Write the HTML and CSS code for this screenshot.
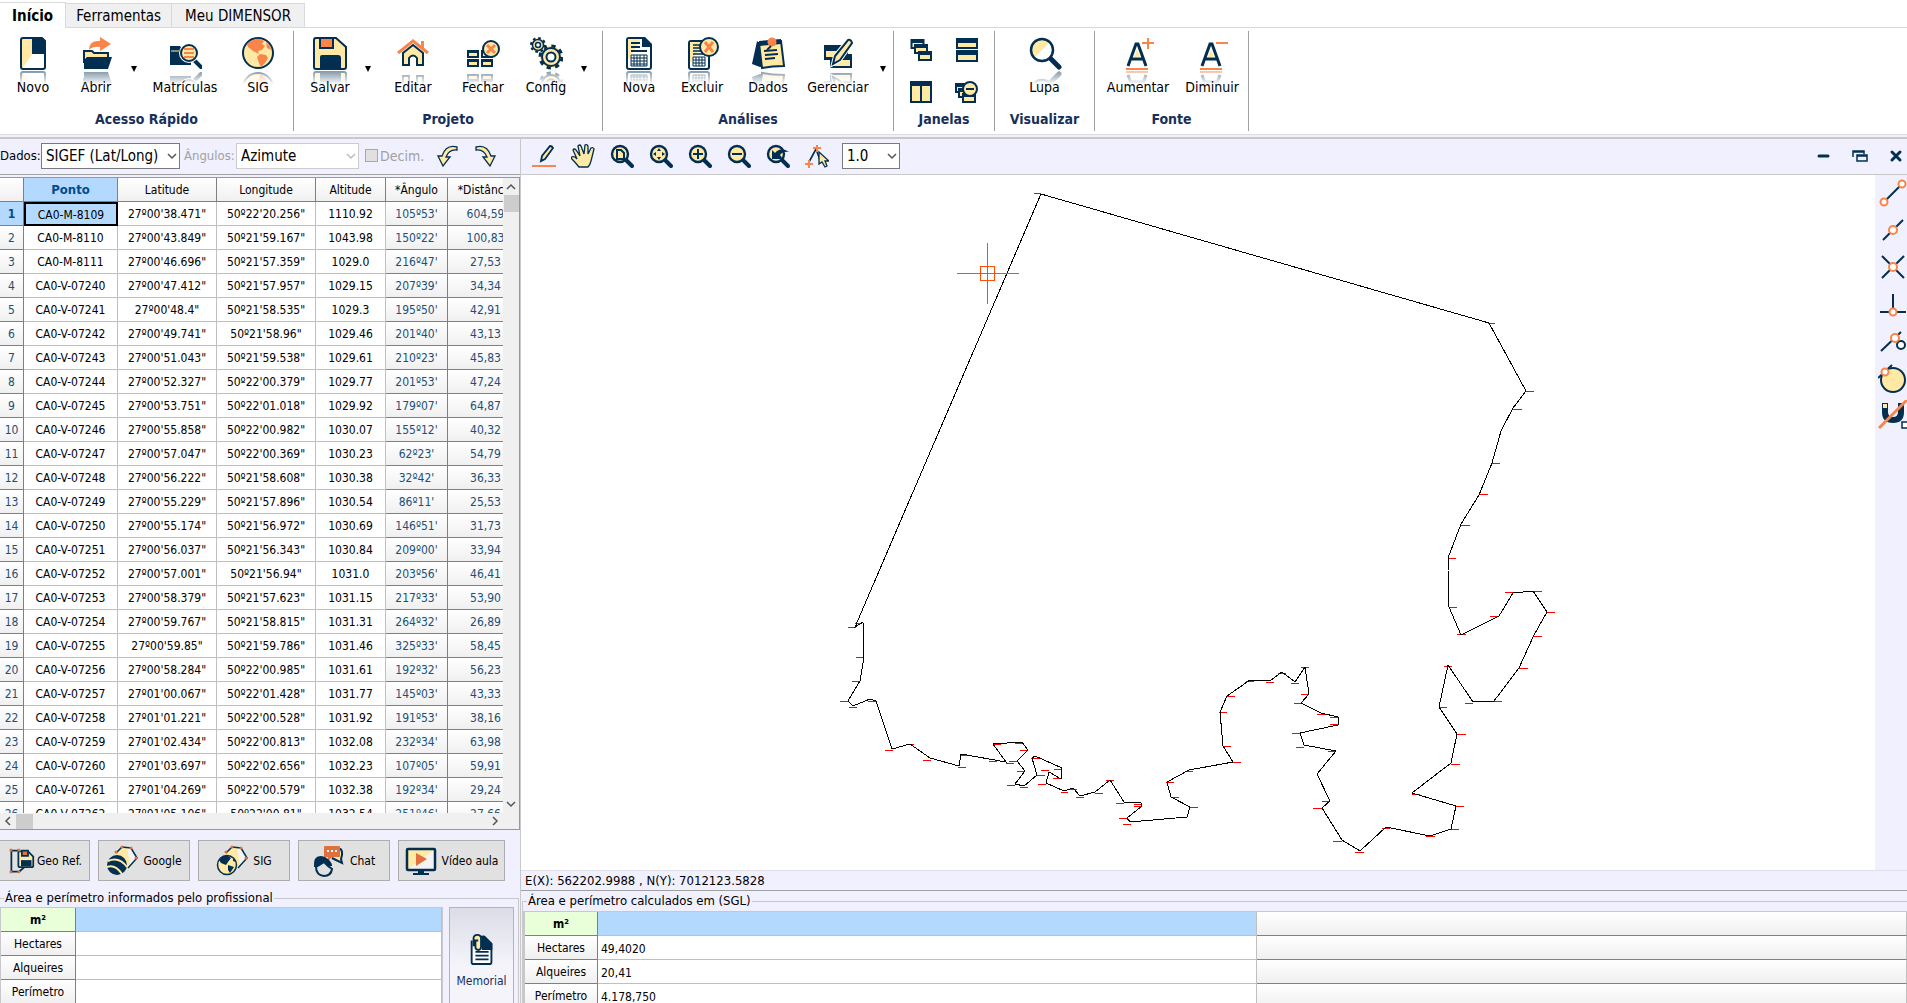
FILE: index.html
```html
<!DOCTYPE html>
<html lang="pt-BR">
<head>
<meta charset="utf-8">
<title>Dimensor</title>
<link rel="stylesheet" href="styles.css">
</head>
<body>
<svg class="defs" aria-hidden="true">
  <symbol id="lens" viewBox="0 0 24 24"><path d="M15 15l7 7" stroke="#022f51" stroke-width="4" stroke-linecap="round"/><circle cx="10" cy="10" r="8" fill="#ffe9a5" stroke="#022f51" stroke-width="2.4"/></symbol>
  <symbol id="chev" viewBox="0 0 10 10"><path d="M1 3l4 4 4-4" fill="none" stroke="currentColor" stroke-width="1.5"/></symbol>
  <symbol id="win" viewBox="0 0 14 10"><path d="M0 0h14v10H0z" fill="#022f51"/><path d="M2 4h10v4H2z" fill="#ffe9a5"/></symbol>
</svg>

<header class="ribbon">
  <nav class="tabs">
    <button class="tab tab-on">Início</button>
    <button class="tab">Ferramentas</button>
    <button class="tab">Meu DIMENSOR</button>
  </nav>
  <div class="groups">
    <section class="group g-quick">
      <div class="tools">
        <button class="tool w66"><span class="ico"><svg viewBox="0 0 34 34"><path d="M5 2h23v31H5z" fill="#fff"/><path d="M5 2h12v15L6 33H5z" fill="#ffe9a5"/><path d="M16 2h10l3 3v13H16z" fill="#022f51"/><path d="M7 2h19l3 3v26q0 2-2 2H7q-2 0-2-2V4q0-2 2-2z" fill="none" stroke="#022f51" stroke-width="2"/></svg></span>Novo</button>
        <button class="tool w60"><span class="ico"><svg viewBox="0 0 34 34"><path d="M5 27V15h8l2 2h14v6" fill="#ffe9a5" stroke="#022f51" stroke-width="2"/><path d="M5 33V24l3-3h25l-4 12z" fill="#022f51"/><path d="M10 14q0-10 11-9V1l11 7-11 7v-4q-7-1-11 3z" fill="#f98549"/></svg></span>Abrir</button>
        <button class="drop" aria-label="Mais opções de abrir"></button>
        <button class="tool w86"><span class="ico"><svg viewBox="0 0 34 34"><path d="M2 10h10l2 3h9v16H2z" fill="#022f51"/><path d="M3 15h8" stroke="#ffe9a5"/><path d="M26 24l7 7" stroke="#022f51" stroke-width="4" stroke-linecap="round"/><circle cx="21" cy="17" r="8" fill="#ffe9a5" stroke="#fff" stroke-width="4"/><circle cx="21" cy="17" r="8" fill="#ffe9a5" stroke="#022f51" stroke-width="2"/><path d="M16 13h10M16 17h10M16 21h10" stroke="#f98549" stroke-width="2"/></svg></span>Matrículas</button>
        <button class="tool w60"><span class="ico"><svg viewBox="0 0 34 34"><circle cx="17" cy="17" r="15" fill="#ffe9a5" stroke="#022f51" stroke-width="2"/><path d="M6 8q6-6 13-5l4 2-2 3 3 2-3 4-4 1 1 3-6-3-5-4zM19 18l6 1 2 3-3 5-4 4-2-4-2-6z M25 6l4 4 1 4-4-2z" fill="#f98549"/></svg></span>SIG</button>
      </div>
      <h2>Acesso Rápido</h2>
    </section>
    <section class="group g-project">
      <div class="tools">
        <button class="tool w60"><span class="ico"><svg viewBox="0 0 34 34"><path d="M3 2h20l10 9v20q0 2-2 2H3q-2 0-2-2V4q0-2 2-2z" fill="#ffe9a5" stroke="#022f51" stroke-width="2"/><path d="M7 2h13v10H7z" fill="#f98549" stroke="#022f51" stroke-width="2"/><path d="M7 33V21q0-2 2-2h16q3 0 3 3v11z" fill="#022f51"/></svg></span>Salvar</button>
        <button class="drop" aria-label="Mais opções de salvar"></button>
        <button class="tool w74"><span class="ico"><svg viewBox="0 0 34 34"><path d="M7 17v12h6v-7q4-5 8 0v7h6V17L17 9z" fill="#ffe9a5" stroke="#022f51" stroke-width="2"/><path d="M2 17L17 5l15 12" fill="none" stroke="#f98549" stroke-width="3"/><path d="M25 5h3v7h-3z" fill="#f98549"/></svg></span>Editar</button>
        <button class="tool w66"><span class="ico"><svg viewBox="0 0 34 34"><g fill="#ffe9a5" stroke="#022f51" stroke-width="2"><path d="M2 15h10v6H2zM16 15h10v6H16zM2 24h10v6H2zM16 24h10v6H16z"/></g><path d="M1 14h12v3H1zM1 23h12v3H1zM15 23h12v3H15z" fill="#022f51"/><circle cx="25" cy="13" r="8" fill="#ffe9a5" stroke="#022f51" stroke-width="2"/><path d="M21 9l8 8M29 9l-8 8" stroke="#f98549" stroke-width="3"/></svg></span>Fechar</button>
        <button class="tool w60"><span class="ico"><svg viewBox="0 0 34 34"><g fill="#ffe9a5" stroke="#022f51"><circle cx="22" cy="21" r="11" stroke-width="3" stroke-dasharray="4.300 4.340"/><circle cx="22" cy="21" r="9" stroke-width="2"/><circle cx="22" cy="21" r="4.500" fill="#fff" stroke-width="2"/><circle cx="9" cy="9" r="7" stroke-width="2" stroke-dasharray="2.700 2.800"/><circle cx="9" cy="9" r="5.500" stroke-width="1.500"/><circle cx="9" cy="9" r="2.500" fill="#fff" stroke-width="1.500"/></g></svg></span>Config</button>
        <button class="drop" aria-label="Mais opções de configuração"></button>
      </div>
      <h2>Projeto</h2>
    </section>
    <section class="group g-analysis">
      <div class="tools">
        <button class="tool w60"><span class="ico"><svg viewBox="0 0 34 34"><path d="M7 2h15l7 8v21q0 2-2 2H7q-2 0-2-2V4q0-2 2-2z" fill="#fff" stroke="#022f51" stroke-width="2"/><path d="M6 3h13L6 24z" fill="#ffe9a5"/><path d="M20 1h3l7 7v3H20z" fill="#022f51"/><path d="M9 7h9M9 11h9M9 15h16" stroke="#022f51" stroke-width="2"/><path d="M9 19h16v11H9zM9 22h16M9 25h16M9 28h16M12 19v11M15 19v11M18 19v11M22 19v11" fill="none" stroke="#022f51"/></svg></span>Nova</button>
        <button class="tool w66"><span class="ico"><svg viewBox="0 0 34 34"><path d="M6 5h18v26q0 2-2 2H6q-2 0-2-2V7q0-2 2-2z" fill="#fff" stroke="#022f51" stroke-width="2"/><path d="M5 6h14L5 27z" fill="#ffe9a5"/><path d="M8 9h8M8 12h8M8 15h8M8 18h13" stroke="#022f51" stroke-width="1.500"/><path d="M8 21h12v9H8zM8 24h12M8 27h12M11 21v9M14 21v9M17 21v9" fill="none" stroke="#022f51"/><circle cx="24" cy="11" r="9" fill="#ffe9a5" stroke="#022f51" stroke-width="2"/><path d="M20 6l8 10M28 6l-8 10" stroke="#f98549" stroke-width="3"/></svg></span>Excluir</button>
        <button class="tool w66"><span class="ico"><svg viewBox="0 0 34 34"><path d="M6 5L1 28l8 3 21-2z" fill="#022f51"/><path d="M8 7l22-2 3 25q-12 0-22 2z" fill="#ffe9a5" stroke="#022f51" stroke-width="2"/><path d="M8 5l22-2v5L8 10z" fill="#022f51"/><path d="M13 15l13-1M14 19l13-1M14 23l10-1" stroke="#022f51" stroke-width="2"/><circle cx="21" cy="6" r="4.500" fill="#f98549"/><path d="M20 10l-4 4" stroke="#022f51" stroke-width="2"/></svg></span>Dados</button>
        <button class="tool w74"><span class="ico"><svg viewBox="0 0 34 34"><path d="M3 9h24v15H3zM9 18h22v14H9z" fill="#022f51"/><path d="M5 15h12v6H5zM11 24h18v6H11z" fill="#ffe9a5"/><path d="M12 28l2-8L27 4q3-1 4 3L19 24z" fill="#ffe9a5" stroke="#fff" stroke-width="4"/><path d="M12 28l2-8L27 4q3-1 4 3L19 24z" fill="#ffe9a5" stroke="#022f51" stroke-width="2"/></svg></span>Gerenciar</button>
        <button class="drop" aria-label="Mais opções de gerenciar"></button>
      </div>
      <h2>Análises</h2>
    </section>
    <section class="group g-windows">
      <div class="minis">
        <button class="mini" aria-label="Cascata"><svg viewBox="0 0 24 24"><use href="#win" x="1" y="1" width="15" height="10"/><use href="#win" x="4" y="6" width="16" height="10"/><use href="#win" x="8" y="13" width="16" height="10"/></svg></button>
        <button class="mini" aria-label="Lado a lado horizontal"><svg viewBox="0 0 24 24"><path d="M1 0h22v11H1zM1 12h22v12H1z" fill="#022f51"/><path d="M3 5h18v4H3zM3 17h18v5H3z" fill="#ffe9a5"/></svg></button>
        <button class="mini" aria-label="Lado a lado vertical"><svg viewBox="0 0 24 24"><path d="M1 1h22v22H1z" fill="#022f51"/><path d="M3 6h8v15H3zM13 6h8v15h-8z" fill="#ffe9a5"/></svg></button>
        <button class="mini" aria-label="Fechar janelas"><svg viewBox="0 0 24 24"><use href="#win" x="0" y="3" width="14" height="10"/><use href="#win" x="3" y="8" width="14" height="10"/><use href="#win" x="6" y="13" width="16" height="10"/><circle cx="15" cy="9" r="7" fill="#ffe9a5" stroke="#022f51" stroke-width="2"/><path d="M11 9h8" stroke="#022f51" stroke-width="2"/></svg></button>
      </div>
      <h2>Janelas</h2>
    </section>
    <section class="group g-view">
      <div class="tools">
        <button class="tool w66"><span class="ico"><svg viewBox="0 0 34 34"><path d="M22 22l9 9" stroke="#022f51" stroke-width="5" stroke-linecap="round"/><circle cx="14" cy="14" r="11" fill="#fff"/><path d="M22 6L6 22A11 11 0 0 1 22 6z" fill="#ffe9a5"/><circle cx="14" cy="14" r="11" fill="none" stroke="#022f51" stroke-width="2.500"/></svg></span>Lupa</button>
      </div>
      <h2>Visualizar</h2>
    </section>
    <section class="group g-font">
      <div class="tools">
        <button class="tool w74"><span class="ico"><svg viewBox="0 0 34 34"><path d="M7 30L15 8h2l8 22M10 23h12" fill="none" stroke="#022f51" stroke-width="3"/><path d="M16 13l3 8h-6z" fill="#ffe9a5"/><path d="M5 33h22M27 2v11M21 7h12" stroke="#f98549" stroke-width="2"/></svg></span>Aumentar</button>
        <button class="tool w74"><span class="ico"><svg viewBox="0 0 34 34"><path d="M7 30L15 8h2l8 22M10 23h12" fill="none" stroke="#022f51" stroke-width="3"/><path d="M16 13l3 8h-6z" fill="#ffe9a5"/><path d="M5 33h22M21 7h12" stroke="#f98549" stroke-width="2"/></svg></span>Diminuir</button>
      </div>
      <h2>Fonte</h2>
    </section>
  </div>
</header>

<main class="work">
  <aside class="left">
    <div class="filters">
      <label for="dados">Dados:</label>
      <span class="pick p-dados"><select id="dados"><option>SIGEF (Lat/Long)</option></select><svg><use href="#chev"/></svg></span>
      <label class="off" for="ang">Ângulos:</label>
      <span class="pick p-ang"><select id="ang" disabled><option>Azimute</option></select><svg><use href="#chev"/></svg></span>
      <label class="check off"><input type="checkbox" disabled>Decim.</label>
      <button class="turn" aria-label="Desfazer"><svg viewBox="0 0 22 22"><path d="M21 2Q10-1 6 11H2l5 10 7-9h-4Q13 4 21 5z" fill="#ffe9a5" stroke="#022f51" stroke-width="1.300"/></svg></button>
      <button class="turn" aria-label="Refazer"><svg viewBox="0 0 22 22"><path d="M1 2q11-3 15 9h4l-5 10-7-9h4Q9 4 1 5z" fill="#ffe9a5" stroke="#022f51" stroke-width="1.300"/></svg></button>
    </div>

    <div class="grid">
      <div class="view">
        <table class="points">
          <colgroup><col class="c-n"><col class="c-p"><col class="c-lat"><col class="c-lon"><col class="c-alt"><col class="c-ang"><col class="c-dis"></colgroup>
          <thead><tr><th></th><th class="sel">Ponto</th><th>Latitude</th><th>Longitude</th><th>Altitude</th><th>*Ângulo</th><th>*Distância</th></tr></thead>
          <tbody>
          <tr class="cur"><th>1<td>CA0-M-8109<td>27º00'38.471"<td>50º22'20.256"<td>1110.92<td>105º53'<td>604,59
          <tr><th>2<td>CA0-M-8110<td>27º00'43.849"<td>50º21'59.167"<td>1043.98<td>150º22'<td>100,83
          <tr><th>3<td>CA0-M-8111<td>27º00'46.696"<td>50º21'57.359"<td>1029.0<td>216º47'<td>27,53
          <tr><th>4<td>CA0-V-07240<td>27º00'47.412"<td>50º21'57.957"<td>1029.15<td>207º39'<td>34,34
          <tr><th>5<td>CA0-V-07241<td>27º00'48.4"<td>50º21'58.535"<td>1029.3<td>195º50'<td>42,91
          <tr><th>6<td>CA0-V-07242<td>27º00'49.741"<td>50º21'58.96"<td>1029.46<td>201º40'<td>43,13
          <tr><th>7<td>CA0-V-07243<td>27º00'51.043"<td>50º21'59.538"<td>1029.61<td>210º23'<td>45,83
          <tr><th>8<td>CA0-V-07244<td>27º00'52.327"<td>50º22'00.379"<td>1029.77<td>201º53'<td>47,24
          <tr><th>9<td>CA0-V-07245<td>27º00'53.751"<td>50º22'01.018"<td>1029.92<td>179º07'<td>64,87
          <tr><th>10<td>CA0-V-07246<td>27º00'55.858"<td>50º22'00.982"<td>1030.07<td>155º12'<td>40,32
          <tr><th>11<td>CA0-V-07247<td>27º00'57.047"<td>50º22'00.369"<td>1030.23<td>62º23'<td>54,79
          <tr><th>12<td>CA0-V-07248<td>27º00'56.222"<td>50º21'58.608"<td>1030.38<td>32º42'<td>36,33
          <tr><th>13<td>CA0-V-07249<td>27º00'55.229"<td>50º21'57.896"<td>1030.54<td>86º11'<td>25,53
          <tr><th>14<td>CA0-V-07250<td>27º00'55.174"<td>50º21'56.972"<td>1030.69<td>146º51'<td>31,73
          <tr><th>15<td>CA0-V-07251<td>27º00'56.037"<td>50º21'56.343"<td>1030.84<td>209º00'<td>33,94
          <tr><th>16<td>CA0-V-07252<td>27º00'57.001"<td>50º21'56.94"<td>1031.0<td>203º56'<td>46,41
          <tr><th>17<td>CA0-V-07253<td>27º00'58.379"<td>50º21'57.623"<td>1031.15<td>217º33'<td>53,90
          <tr><th>18<td>CA0-V-07254<td>27º00'59.767"<td>50º21'58.815"<td>1031.31<td>264º32'<td>26,89
          <tr><th>19<td>CA0-V-07255<td>27º00'59.85"<td>50º21'59.786"<td>1031.46<td>325º33'<td>58,45
          <tr><th>20<td>CA0-V-07256<td>27º00'58.284"<td>50º22'00.985"<td>1031.61<td>192º32'<td>56,23
          <tr><th>21<td>CA0-V-07257<td>27º01'00.067"<td>50º22'01.428"<td>1031.77<td>145º03'<td>43,33
          <tr><th>22<td>CA0-V-07258<td>27º01'01.221"<td>50º22'00.528"<td>1031.92<td>191º53'<td>38,16
          <tr><th>23<td>CA0-V-07259<td>27º01'02.434"<td>50º22'00.813"<td>1032.08<td>232º34'<td>63,98
          <tr><th>24<td>CA0-V-07260<td>27º01'03.697"<td>50º22'02.656"<td>1032.23<td>107º05'<td>59,91
          <tr><th>25<td>CA0-V-07261<td>27º01'04.269"<td>50º22'00.579"<td>1032.38<td>192º34'<td>29,24
          <tr><th>26<td>CA0-V-07262<td>27º01'05.106"<td>50º22'00.81"<td>1032.54<td>251º46'<td>27,66
          </tbody>
        </table>
      </div>
      <div class="vbar"><svg class="up"><use href="#chev"/></svg><span></span><svg><use href="#chev"/></svg></div>
      <div class="hbar"><svg class="lf"><use href="#chev"/></svg><span></span><svg class="rt"><use href="#chev"/></svg></div>
    </div>

    <div class="actions">
      <button class="act a-geo"><svg viewBox="0 0 32 32"><path d="M13 4H5v24h9l6-5" fill="none" stroke="#022f51" stroke-width="2"/><path d="M13 5h11l6 6v10q0 2-2 2H15q-2 0-2-2z" fill="#ffe9a5" stroke="#022f51" stroke-width="2"/><path d="M17 4h7v6h-7z" fill="#e0713f" stroke="#022f51" stroke-width="2"/><path d="M16 15h12v7H16z" fill="#022f51"/><g fill="#e0713f"><path d="M3 2h3v3H3zM3 27h3v3H3zM12 27h3v3h-3zM12 2h3v3h-3z"/></g></svg>Geo Ref.</button>
      <button class="act"><svg viewBox="0 0 32 32"><path d="M10 8l6-6 9 1 6 10-9 10-12-5z" fill="#f4f4f4"/><path d="M10 8l6-6h5l3 18-4 3-10-5z" fill="#ffe9a5"/><path d="M10 8l6-6 9 1 6 10-9 10" fill="none" stroke="#022f51" stroke-width="1.500"/><g fill="#e0713f"><circle cx="16" cy="2" r="1.500"/><circle cx="25" cy="3" r="1.500"/><circle cx="30" cy="13" r="1.500"/><circle cx="10" cy="7" r="1.500"/></g><circle cx="11" cy="20" r="10" fill="#022f51"/><path d="M2 16q11-5 19 6M1 22q8-3 15 7" fill="none" stroke="#ffe9a5" stroke-width="2"/></svg>Google</button>
      <button class="act"><svg viewBox="0 0 32 32"><path d="M10 8l6-6 9 1 6 10-9 10-12-5z" fill="#f4f4f4"/><path d="M10 8l6-6h5l3 18-4 3-10-5z" fill="#ffe9a5"/><path d="M10 8l6-6 9 1 6 10-9 10" fill="none" stroke="#022f51" stroke-width="1.500"/><g fill="#e0713f"><circle cx="16" cy="2" r="1.500"/><circle cx="25" cy="3" r="1.500"/><circle cx="30" cy="13" r="1.500"/><circle cx="10" cy="7" r="1.500"/></g><circle cx="11" cy="20" r="9.500" fill="#ffe9a5" stroke="#022f51" stroke-width="1.500"/><path d="M3 15q4-5 9-4l3 2-3 4-2 3-5-2zM12 20l6 2-4 6-2-3zM17 13l3 4-3-1z" fill="#022f51"/></svg>SIG</button>
      <button class="act"><svg viewBox="0 0 32 32"><path d="M22 3q8-1 7 7l-1 4 1 4-6-3-4-2" fill="#ffe9a5" stroke="#022f51" stroke-width="2"/><path d="M12 1h14q1 0 1 1v9q0 1-1 1h-7l-4 4v-4h-3q-1 0-1-1V2q0-1 1-1z" fill="#e0713f"/><path d="M14 6h2M18 6h2M22 6h2" stroke="#fff" stroke-width="2"/><path d="M1 22Q0 8 12 12q7 4 7 9z" fill="#022f51"/><path d="M3 22l5-3 3-2 4 4 4 3q-1 7-8 7-8-1-8-9z" fill="#e1e1e1" stroke="#022f51" stroke-width="2"/></svg>Chat</button>
      <button class="act a-video"><svg viewBox="0 0 32 32"><path d="M2 4h28v21H2z" fill="#f4f4f4"/><path d="M2 4h28L2 25z" fill="#ffe9a5"/><rect x="2" y="4" width="28" height="21" rx="1" fill="none" stroke="#022f51" stroke-width="2.500"/><path d="M11 8l11 6-11 7z" fill="#e0713f"/><path d="M13 25h6v3h5v2H8v-2h5z" fill="#022f51"/></svg>Vídeo aula</button>
    </div>

    <fieldset class="area a-left">
      <legend>Área e perímetro informados pelo profissional</legend>
      <table class="sums">
        <tr class="first"><th>m²</th><td></td></tr>
        <tr><th>Hectares</th><td></td></tr>
        <tr><th>Alqueires</th><td></td></tr>
        <tr><th>Perímetro</th><td></td></tr>
      </table>
      <button class="memo"><svg viewBox="0 0 24 34"><path d="M4 4h10l8 8v19q0 2-2 2H3q-2 0-2-2V8" fill="#fff" stroke="#022f51" stroke-width="2"/><path d="M12 3h3l8 8v7H12z" fill="#022f51"/><path d="M5 20h14M5 24h14M5 28h14" stroke="#022f51" stroke-width="2"/><path d="M3 14V6q0-4 4-4t4 4v9q0 3-3 3t-3-3V8h3" fill="#ffe9a5" stroke="#022f51" stroke-width="2"/></svg>Memorial</button>
    </fieldset>
  </aside>

  <section class="right">
    <div class="mapbar">
      <button aria-label="Desenhar"><svg viewBox="0 0 24 24"><path d="M9 17l1-5 8-10q2 0 3 2l-8 11z" fill="#ffe9a5" stroke="#022f51" stroke-width="1.800"/><path d="M0 22h24" stroke="#f98549" stroke-width="2"/></svg></button>
      <button aria-label="Mover"><svg viewBox="0 0 24 24"><path d="M8 23q-4-5-8-9 1-2 4-1l2 2-4-9q1-2 3 0l4 6L7 2q2-2 3 0l3 8 1-9q2-1 3 1l0 8 3-6q2-1 3 1l-3 12q-1 4-3 6z" fill="#ffe9a5" stroke="#022f51" stroke-width="1.300"/></svg></button>
      <button aria-label="Enquadrar folha"><svg viewBox="0 0 24 24"><use href="#lens"/><path d="M7 6h4l3 3v6H7z" fill="#ffe9a5" stroke="#022f51" stroke-width="2"/></svg></button>
      <button aria-label="Enquadrar tudo"><svg viewBox="0 0 24 24"><use href="#lens"/><path d="M10 4l2 3H8zM10 16l2-3H8zM4 10l3-2v4zM16 10l-3-2v4z" fill="#022f51"/></svg></button>
      <button aria-label="Ampliar"><svg viewBox="0 0 24 24"><use href="#lens"/><path d="M5 10h10M10 5v10" stroke="#022f51" stroke-width="2"/></svg></button>
      <button aria-label="Reduzir"><svg viewBox="0 0 24 24"><use href="#lens"/><path d="M5 10h10" stroke="#022f51" stroke-width="2"/></svg></button>
      <button aria-label="Zoom anterior"><svg viewBox="0 0 24 24"><use href="#lens"/><path d="M6 15V6l3 3q6-7 14-1-6-1-9 3l3 4z" fill="#022f51"/></svg></button>
      <button aria-label="Selecionar vértice"><svg viewBox="0 0 24 24"><path d="M4 18L11 5l5 14" fill="none" stroke="#022f51" stroke-width="1.600"/><path d="M12 1v7M8 4h8M4 16v8M0 20h8" stroke="#f98549" stroke-width="2"/><path d="M14 8v12l3-2 3 5 2-1-2-5h4z" fill="#ffe9a5" stroke="#022f51" stroke-width="1.300"/></svg></button>
      <span class="pick p-scale"><select aria-label="Escala"><option>1.0</option></select><svg><use href="#chev"/></svg></span>
      <span class="wins">
        <button aria-label="Minimizar"><svg viewBox="0 0 16 16"><path d="M3 8h9" stroke="#022f51" stroke-width="3" stroke-linecap="round"/></svg></button>
        <button aria-label="Restaurar"><svg viewBox="0 0 16 16"><path d="M1 9V3h11v3M1 4h11M5 7h10v6H5zM5 8h10" fill="none" stroke="#022f51" stroke-width="1.500"/></svg></button>
        <button aria-label="Fechar"><svg viewBox="0 0 16 16"><path d="M4 4l8 8M12 4l-8 8" stroke="#022f51" stroke-width="3" stroke-linecap="round"/></svg></button>
      </span>
    </div>

    <div class="stage">
      <svg class="plan" viewBox="521 175 1354 695" preserveAspectRatio="xMidYMid meet">
        <path class="tick" d="M1034 193h7M1488 323h7M1526 391h8M1513 409h9M1492 463h8M1479 494h9M1461 525h9M1448 558h8M1449 607h8M1457 634h9M1490 616h8M1505 592h8M1534 591h8M1547 612h8M1534 636h8M1519 668h9M1494 701h8M1465 703h8M1444 666h8M1439 707h8M1457 734h9M1451 764h9M1412 794h8M1456 806h8M1451 829h8M1426 836h9M1382 828h8M1355 852h9M1333 841h9M1313 808h9M1322 801h8M1328 751h8M1296 747h8M1292 733h8M1330 724h8M1330 717h8M1317 714h8M1294 703h8M1301 694h8M1301 667h8M1291 683h8M1278 673h8M1266 682h8M1246 681h8M1227 696h8M1219 712h8M1223 746h8M1233 762h8M1185 771h8M1166 782h8M1171 797h8M1190 807h8M1123 824h8M1119 818h8M1134 806h8M1134 804h8M1116 803h8M1106 780h8M1095 793h8M1076 797h8M1069 789h8M1061 792h7M1038 784h8M1053 778h8M1037 775h8M1041 770h8M1054 769h8M1031 758h8M1020 787h8M1007 785h8M1017 771h8M1006 763h8M1009 761h8M1020 750h8M1015 743h8M993 744h8M989 761h8M961 755h8M958 767h8M923 760h8M906 744h8M885 750h8M868 701h8M849 707h8M840 701h8M852 681h8M856 657h8M855 623h6M848 627h8"/>
        <path class="edge" d="M1041 194L1489 323 1526 391 1513 408 1501 431 1492 463 1479 495 1461 524 1448 558V570L1449 607 1461 635 1499 616 1513 593 1533 591 1547 612 1534 635 1519 668 1494 701 1473 702 1448 665 1439 707 1457 734 1451 763 1412 793 1456 806 1451 829 1430 836 1386 827 1360 851 1342 840 1322 808 1330 801 1317 774 1336 751 1304 745 1300 733 1338 725V717L1321 713 1301 703 1309 694 1305 667 1295 682 1282 672 1270 681 1250 680 1227 696 1220 712 1223 746 1233 762 1189 770 1167 782 1171 797 1190 807 1187 817 1130 822 1127 818 1142 806 1141 803 1124 802 1110 780 1095 792 1080 796 1073 788 1064 791 1046 783 1049 772 1061 779 1062 768 1035 756 1032 758 1037 775 1024 786 1015 784 1025 771 1017 761 1028 750 1022 742 993 744 1006 762 961 754 959 766 930 758 910 744 892 749 876 701 870 699 853 706 848 701 860 681 864 657 863 622 855 627Z"/>
        <path class="cross" d="M987 243v61M957 273h62M980 266h14v14h-14z"/>
      </svg>
      <div class="snaps">
        <button aria-label="Extremidade"><svg viewBox="0 0 30 30"><path d="M6 24L24 6" stroke="#022f51" stroke-width="2"/><g class="dot"><circle cx="6" cy="24" r="3.500"/><circle cx="24" cy="6" r="3.500"/></g></svg></button>
        <button aria-label="Ponto médio"><svg viewBox="0 0 30 30"><path d="M5 25L25 5" stroke="#022f51" stroke-width="2"/><g class="dot"><circle cx="15" cy="15" r="4"/></g></svg></button>
        <button aria-label="Interseção"><svg viewBox="0 0 30 30"><path d="M4 4l22 22M4 26L26 4" stroke="#022f51" stroke-width="2"/><g class="dot"><circle cx="15" cy="15" r="4"/></g></svg></button>
        <button aria-label="Perpendicular"><svg viewBox="0 0 30 30"><path d="M15 5v18M2 23h26" stroke="#022f51" stroke-width="2"/><g class="dot"><circle cx="15" cy="23" r="3.500"/></g></svg></button>
        <button aria-label="Próximo"><svg viewBox="0 0 30 30"><path d="M3 25L23 6" stroke="#022f51" stroke-width="2"/><circle cx="23" cy="19" r="4" fill="#fff" stroke="#022f51" stroke-width="2"/><g class="dot"><circle cx="17" cy="12" r="4"/></g></svg></button>
        <button aria-label="Tangente"><svg viewBox="0 0 30 30"><circle cx="15" cy="17" r="12" fill="#ffe9a5" stroke="#022f51" stroke-width="2"/><path d="M0 15L14 2" stroke="#022f51" stroke-width="2"/><g class="dot"><circle cx="7" cy="9" r="3.500"/></g></svg></button>
        <button aria-label="Desligar ímã"><svg viewBox="0 0 30 30"><path d="M7 3v9q0 8 8 8t8-8V3" fill="none" stroke="#022f51" stroke-width="6"/><path d="M5 4h4v4H5z" fill="#ffe9a5"/><path d="M24 22h6v6h-6z" fill="#fff" stroke="#022f51" stroke-width="1.500"/><path d="M1 28L29 0" stroke="#f98549" stroke-width="3"/></svg></button>
      </div>
    </div>

    <output class="coords">E(X): 562202.9988 , N(Y): 7012123.5828</output>

    <fieldset class="area a-right">
      <legend>Área e perímetro calculados em (SGL)</legend>
      <table class="sums">
        <tr class="first"><th>m²</th><td></td><td class="rest"></td></tr>
        <tr><th>Hectares</th><td>49,4020</td><td class="rest"></td></tr>
        <tr><th>Alqueires</th><td>20,41</td><td class="rest"></td></tr>
        <tr><th>Perímetro</th><td>4.178,750</td><td class="rest"></td></tr>
      </table>
    </fieldset>
  </section>
</main>
</body>
</html>
```
FILE: styles.css
```css
* { box-sizing: border-box; }

body {
  margin: 0;
  height: 100vh;
  display: flex;
  flex-direction: column;
  overflow: hidden;
  background: #f0f0ff;
  color: #000;
  font-family: "DejaVu Sans Condensed", "DejaVu Sans", sans-serif;
  font-size: 12px;
  line-height: 16px;
}

button, select, input { font: inherit; color: inherit; }
button { background: none; border: 0; padding: 0; }
svg { display: block; flex: none; }
.defs { width: 0; height: 0; position: absolute; }

/* Ribbon */
.ribbon {
  background: #fff;
  border-bottom: 1px solid #dcdcdc;
  height: 135px;
  flex: none;
}
.tabs {
  display: flex;
  align-items: flex-end;
  height: 28px;
  border-bottom: 1px solid #d9d9d9;
  font-size: 15px;
}
.tab {
  height: 24px;
  padding: 0 10px;
  background: #f0f0f0;
  border: 1px solid #d9d9d9;
  border-left: 0;
  border-bottom: 0;
}
.tab:last-child { padding: 0 13px; }
.tab-on {
  height: 26px;
  padding: 0 12px;
  background: #fff;
  font-weight: bold;
  margin-bottom: -1px;
}
.groups { display: flex; padding-top: 3px; }
.group {
  height: 100px;
  border-right: 1px solid #a0a0a0;
  display: flex;
  flex-direction: column;
  justify-content: space-between;
}
.g-quick { width: 294px; }
.g-project { width: 309px; }
.g-analysis { width: 291px; }
.g-windows { width: 101px; }
.g-view { width: 100px; }
.g-font { width: 154px; }
.group h2 {
  margin: 0;
  padding-bottom: 3px;
  text-align: center;
  font-size: 14px;
  line-height: 18px;
  color: #17305a;
}
.tools { display: flex; padding-top: 5px; }
.g-view .tools { justify-content: center; }
.tool {
  flex: none;
  display: flex;
  flex-direction: column;
  align-items: center;
  gap: 8px;
  font-size: 14px;
  line-height: 18px;
  white-space: nowrap;
}
.ico {
  width: 34px;
  height: 34px;
  -webkit-box-reflect: below 1px linear-gradient(transparent 60%, rgba(0, 0, 0, 0.5));
}
.w60 { width: 60px; }
.w66 { width: 66px; }
.w74 { width: 74px; }
.w86 { width: 86px; }
.g-analysis .tools, .g-project .tools, .g-font .tools { padding-left: 6px; }
.drop {
  width: 16px;
  flex: none;
  display: flex;
  justify-content: center;
  padding-top: 30px;
}
.drop::before {
  content: "";
  border: 3px solid transparent;
  border-top: 6px solid #000;
  border-bottom: 0;
}
.minis {
  display: grid;
  grid-template-columns: 24px 24px;
  gap: 18px 22px;
  justify-content: center;
  padding-top: 7px;
}
.mini svg { width: 24px; height: 24px; }

/* Work area */
.work {
  flex: 1;
  min-height: 0;
  display: flex;
  margin-top: 2px;
  border-top: 2px solid #c8c8c8;
}
.left {
  flex: 0 0 520px;
  display: flex;
  flex-direction: column;
  min-width: 0;
}
.right {
  flex: 1;
  min-width: 0;
  display: flex;
  flex-direction: column;
  border-left: 1px solid #c8c8c8;
}

.filters {
  height: 36px;
  display: flex;
  align-items: center;
  padding-bottom: 2px;
  border-bottom: 1px solid #a0a0a0;
  white-space: nowrap;
  font-size: 13px;
}
.filters label:first-child { width: 41px; }
.off { color: #a0a0a0; }
.filters > .off { width: 56px; padding-left: 4px; }
.pick { position: relative; height: 26px; }
.pick select {
  appearance: none;
  width: 100%;
  height: 26px;
  padding: 0 4px;
  border: 1px solid #7a7a7a;
  border-radius: 0;
  background: #fff;
  font-size: 15px;
  line-height: 20px;
  opacity: 1;
}
.pick select:disabled { border-color: #ccc; color: #000; }
.pick svg {
  position: absolute;
  right: 3px;
  top: 8px;
  width: 10px;
  height: 10px;
  color: #555;
  pointer-events: none;
}
.p-dados { width: 139px; }
.p-ang { width: 123px; }
.p-ang svg { color: #bbb; }
.p-scale { width: 58px; }
.filters .check {
  width: auto;
  padding: 0;
  margin: 0 12px 0 6px;
  display: flex;
  align-items: center;
  gap: 2px;
  font-size: 14px;
}
.check input {
  appearance: none;
  margin: 0;
  width: 13px;
  height: 13px;
  border: 1px solid #a8a8a8;
  background: #e0e0e0;
}
.turn { width: 22px; height: 22px; margin-right: 17px; }

/* Point list */
.grid {
  flex: 1;
  min-height: 0;
  display: grid;
  grid-template: minmax(0, 1fr) 16px / minmax(0, 1fr) 16px;
  margin-top: 2px;
  border: 1px solid #7f9db9;
  border-left: 0;
  background: #f0f0f0;
}
.view { overflow: hidden; background: #fff; }
.points {
  table-layout: fixed;
  width: 524px;
  border-collapse: separate;
  border-spacing: 0;
  text-align: center;
}
.c-n { width: 24px; }
.c-p { width: 94px; }
.c-lat, .c-lon { width: 99px; }
.c-alt { width: 70px; }
.c-ang { width: 62px; }
.c-dis { width: 76px; }
.points th, .points td {
  height: 24px;
  padding: 0;
  border-right: 1px solid #c0c0c0;
  border-bottom: 1px solid #c0c0c0;
  white-space: nowrap;
}
.points td { padding-top: 1px; }
.points th, .points td:nth-child(n+6) {
  font-weight: normal;
  background: linear-gradient(#fff, #f0f0f0);
  border-color: #808080;
}
.points tbody th, .points td:nth-child(n+6) { color: #1c5078; }
.points .sel, .points .cur th { background: #b3d9ff; color: #004c8c; font-weight: bold; }
.points .sel { font-size: 13px; }
.points .cur td:nth-child(2) { background: #b3d9ff; border: 2px solid #000; }
.vbar, .hbar {
  display: flex;
  align-items: center;
  justify-content: space-between;
  color: #555;
}
.vbar { flex-direction: column; padding: 4px 0; }
.vbar span { width: 15px; height: 17px; margin: 3px 0 auto; background: #cdcdcd; }
.hbar { padding: 0 3px; }
.hbar span { width: 17px; height: 15px; margin: 0 auto 0 3px; background: #cdcdcd; }
.vbar svg, .hbar svg { width: 10px; height: 10px; }
.up { transform: rotate(180deg); }
.lf { transform: rotate(90deg); }
.rt { transform: rotate(-90deg); }

/* Action buttons */
.actions { display: flex; gap: 8px; padding: 10px 0 8px; }
.act {
  width: 92px;
  height: 41px;
  display: flex;
  align-items: center;
  justify-content: center;
  gap: 5px;
  background: #e1e1e1;
  border: 1px solid #adadad;
  white-space: nowrap;
}
.act svg { width: 32px; height: 32px; }
.a-geo { width: 90px; gap: 2px; border-left: 0; }
.a-geo svg { width: 28px; height: 28px; }
.a-video { width: 107px; }

/* Area panels */
.area {
  margin: 0;
  padding: 0;
  min-width: 0;
  border: 1px solid #c8c8cc;
  border-bottom: 0;
  display: flex;
}
.area legend { padding: 0 1px; margin-left: 4px; font-size: 13px; line-height: 18px; }
.a-left { border-left: 0; gap: 6px; height: 114px; margin-right: 1px; }
.a-left .memo { margin-right: 4px; }
.sums {
  flex: 1;
  align-self: flex-start;
  table-layout: fixed;
  width: 100%;
  border-collapse: separate;
  border-spacing: 0;
  border: 1px solid #c8c8cc;
  background: #fff;
}
.a-right .sums { border-width: 1px 0 0 2px; margin-top: 1px; }
.sums th {
  width: 73px;
  height: 24px;
  padding: 0;
  font-weight: normal;
  background: linear-gradient(#fff, #f0f0f0);
  border-right: 1px solid #808080;
  border-bottom: 1px solid #808080;
}
.a-left .sums th { width: 75px; }
.sums td { padding: 2px 3px 0; border-bottom: 1px solid #c0c0c0; border-right: 1px solid #c0c0c0; }
.sums .rest {
  width: 47%;
  background: linear-gradient(#fff, #f0f0f0);
  border-bottom-color: #808080;
}
.sums .first th { background: #e8ffd9; font-weight: bold; }
.sums .first td:nth-child(2) { background: #b3d9ff; }
.memo {
  width: 65px;
  display: flex;
  flex-direction: column;
  align-items: center;
  gap: 8px;
  padding-top: 25px;
  border: 1px solid #b4b4bc;
  background: linear-gradient(#dcdce8, #f4f4fa 60%);
  color: #17305a;
}
.memo svg { width: 24px; height: 32px; }

/* Map */
.mapbar {
  height: 36px;
  flex: none;
  display: flex;
  align-items: center;
  gap: 15px;
  padding: 0 3px 2px 11px;
  border-bottom: 1px solid #c8c8c8;
}
.mapbar > button, .mapbar > button svg { width: 24px; height: 24px; }
.p-scale { margin-left: -2px; }
.wins { margin-left: auto; display: flex; gap: 20px; }
.wins svg { width: 16px; height: 16px; }
.stage { flex: 1; min-height: 0; display: flex; background: #fff; }
.plan { flex: 1; min-width: 0; height: 100%; shape-rendering: crispEdges; }
.plan path { fill: none; stroke-width: 1; }
.tick { stroke: #f00; }
.edge { stroke: #000; }
.cross { stroke: #ff4f00; }
.snaps {
  width: 32px;
  background: #f0f0ff;
  display: flex;
  flex-direction: column;
  align-items: flex-start;
  gap: 7px;
  padding: 3px 0 0 3px;
}
.snaps button, .snaps svg { width: 30px; height: 30px; }
.dot { fill: #fff; stroke: #f98549; stroke-width: 2; }
.coords {
  display: block;
  height: 21px;
  flex: none;
  padding: 2px 4px;
  border-top: 1px solid #e0e0ea;
  border-bottom: 1px solid #a0a0a0;
  font-size: 13px;
}
.a-right { margin: 1px 0 0 1px; border-right: 0; height: 111px; }
```
